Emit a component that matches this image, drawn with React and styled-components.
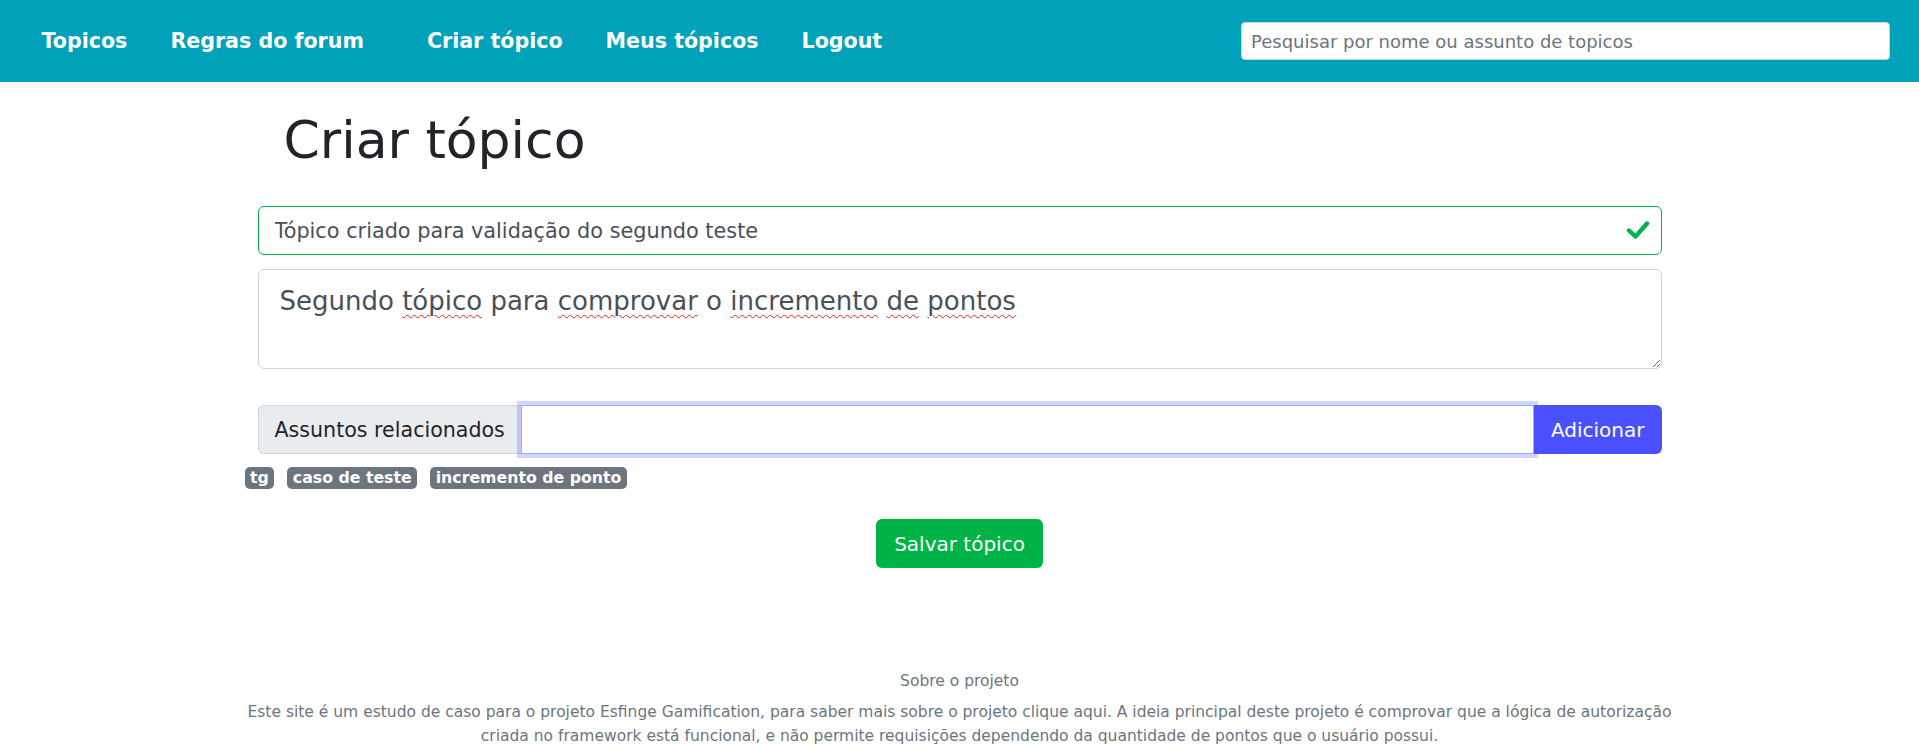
import React, { useState } from 'react'
import styled, { createGlobalStyle } from 'styled-components'

const GlobalStyle = createGlobalStyle`
    body {
        margin: 0;
        font-family: "DejaVu Sans", Verdana, sans-serif;
        background: #fff;
        color: #212529;
    }
    * {
        box-sizing: border-box;
    }
`;

const tags = ['tg', 'caso de teste', 'incremento de ponto']

const CheckIcon = () => (
    <svg width="24" height="20" viewBox="0 0 24 20" fill="none">
        <polyline
            points="3,10.5 9.5,16.5 21,3.5"
            stroke="#00b347"
            strokeWidth="4.4"
            strokeLinecap="round"
            strokeLinejoin="round"
        />
    </svg>
)

const App = () => {
    const [title, setTitle] = useState('Tópico criado para validação do segundo teste')
    const [subject, setSubject] = useState('')

    return (
        <>
            <GlobalStyle />
            <Navbar>
                <NavLink href='#'>Topicos</NavLink>
                <NavLink href='#'>Regras do forum</NavLink>
                <NavLink href='#' $spaced>Criar tópico</NavLink>
                <NavLink href='#'>Meus tópicos</NavLink>
                <NavLink href='#'>Logout</NavLink>
                <SearchInput type='text' placeholder='Pesquisar por nome ou assunto de topicos' />
            </Navbar>

            <Main>
                <Title>Criar tópico</Title>

                <TitleField>
                    <TitleInput value={title} onChange={e => setTitle(e.target.value)} />
                    <Valid><CheckIcon /></Valid>
                </TitleField>

                <TextBox>
                    Segundo <Typo>tópico</Typo> para <Typo>comprovar</Typo> o <Typo>incremento</Typo> <Typo>de</Typo> <Typo>pontos</Typo>
                </TextBox>

                <InputGroup>
                    <Addon>Assuntos relacionados</Addon>
                    <SubjectInput value={subject} onChange={e => setSubject(e.target.value)} />
                    <AddButton>Adicionar</AddButton>
                </InputGroup>

                <Tags>
                    {tags.map(t => <Badge key={t}>{t}</Badge>)}
                </Tags>

                <SaveRow>
                    <SaveButton>Salvar tópico</SaveButton>
                </SaveRow>
            </Main>

            <Footer>
                <FooterTitle>Sobre o projeto</FooterTitle>
                <FooterText>
                    Este site é um estudo de caso para o projeto Esfinge Gamification, para saber mais sobre o projeto clique aqui. A ideia principal deste projeto é comprovar que a lógica de autorização criada no framework está funcional, e não permite requisições dependendo da quantidade de pontos que o usuário possui.
                </FooterText>
            </Footer>
        </>
    )
}

const Navbar = styled.nav`
    display: flex;
    align-items: center;
    height: 82px;
    padding: 0 29px 0 20px;
    background-color: #00a2b9;
`;

const NavLink = styled.a`
    color: #fff;
    font-size: 20.6px;
    font-weight: bold;
    text-decoration: none;
    padding: 0 21.5px;
    margin-left: ${p => (p.$spaced ? '20px' : '0')};
    white-space: nowrap;
`;

const SearchInput = styled.input`
    margin-left: auto;
    width: 649px;
    height: 38px;
    padding: 6px 9px;
    font-family: inherit;
    font-size: 18px;
    color: #495057;
    border: 1px solid #ced4da;
    border-radius: 4px;
    outline: none;

    &::placeholder {
        color: #6c757d;
    }
`;

const Main = styled.main`
    width: 1404px;
    margin: 0 auto;
`;

const Title = styled.h1`
    margin: 27px 0 35px;
    padding-left: 26px;
    font-size: 52px;
    font-weight: 400;
    line-height: 1.2;
    color: #212529;
`;

const TitleField = styled.div`
    position: relative;
`;

const TitleInput = styled.input`
    display: block;
    width: 100%;
    height: 49px;
    padding: 8px 56px 8px 16px;
    font-family: inherit;
    font-size: 20.8px;
    color: #495057;
    border: 1px solid #00b347;
    border-radius: 6px;
    outline: none;
`;

const Valid = styled.span`
    position: absolute;
    right: 12px;
    top: 14px;
    display: flex;
`;

const TextBox = styled.div`
    margin-top: 14px;
    height: 100px;
    padding: 12px 21px;
    font-size: 26px;
    line-height: 1.5;
    color: #495057;
    border: 1px solid #ced4da;
    border-radius: 6px;
    overflow: auto;
    resize: both;
`;

const Typo = styled.span`
    text-decoration: underline wavy #e0241b;
    text-decoration-thickness: 1px;
    text-underline-offset: 4px;
`;

const InputGroup = styled.div`
    display: flex;
    margin-top: 36px;
    height: 49px;
`;

const Addon = styled.span`
    display: flex;
    align-items: center;
    padding: 0 16px;
    font-size: 20.6px;
    color: #212529;
    background-color: #e9ecef;
    border: 1px solid #ced4da;
    border-right: none;
    border-radius: 6px 0 0 6px;
    white-space: nowrap;
`;

const SubjectInput = styled.input`
    position: relative;
    z-index: 2;
    flex: 1;
    min-width: 0;
    padding: 8px 16px;
    font-family: inherit;
    font-size: 20px;
    color: #495057;
    border: 1px solid #86b7fe;
    outline: none;
    box-shadow: 0 0 0 4px rgba(75, 80, 255, 0.25);
`;

const AddButton = styled.button`
    padding: 0 17px;
    font-family: inherit;
    font-size: 20px;
    color: #fff;
    background-color: #4b50ff;
    border: none;
    border-radius: 0 6px 6px 0;
    cursor: pointer;
`;

const Tags = styled.div`
    display: flex;
    gap: 13px;
    margin: 13px 0 0 -13px;
`;

const Badge = styled.span`
    padding: 3px 5.5px;
    font-size: 15.75px;
    font-weight: bold;
    line-height: 1;
    color: #fff;
    background-color: #6c757d;
    border-radius: 5px;
`;

const SaveRow = styled.div`
    display: flex;
    justify-content: center;
    margin-top: 30px;
`;

const SaveButton = styled.button`
    height: 49px;
    padding: 0 18px;
    font-family: inherit;
    font-size: 20px;
    color: #fff;
    background-color: #00b347;
    border: none;
    border-radius: 6px;
    cursor: pointer;
`;

const Footer = styled.footer`
    max-width: 1450px;
    margin: 102px auto 0;
    text-align: center;
    color: #6c757d;
    font-size: 15.5px;
    line-height: 1.5;
`;

const FooterTitle = styled.p`
    margin: 0 0 8px;
`;

const FooterText = styled.p`
    margin: 0;
`;

export default App
